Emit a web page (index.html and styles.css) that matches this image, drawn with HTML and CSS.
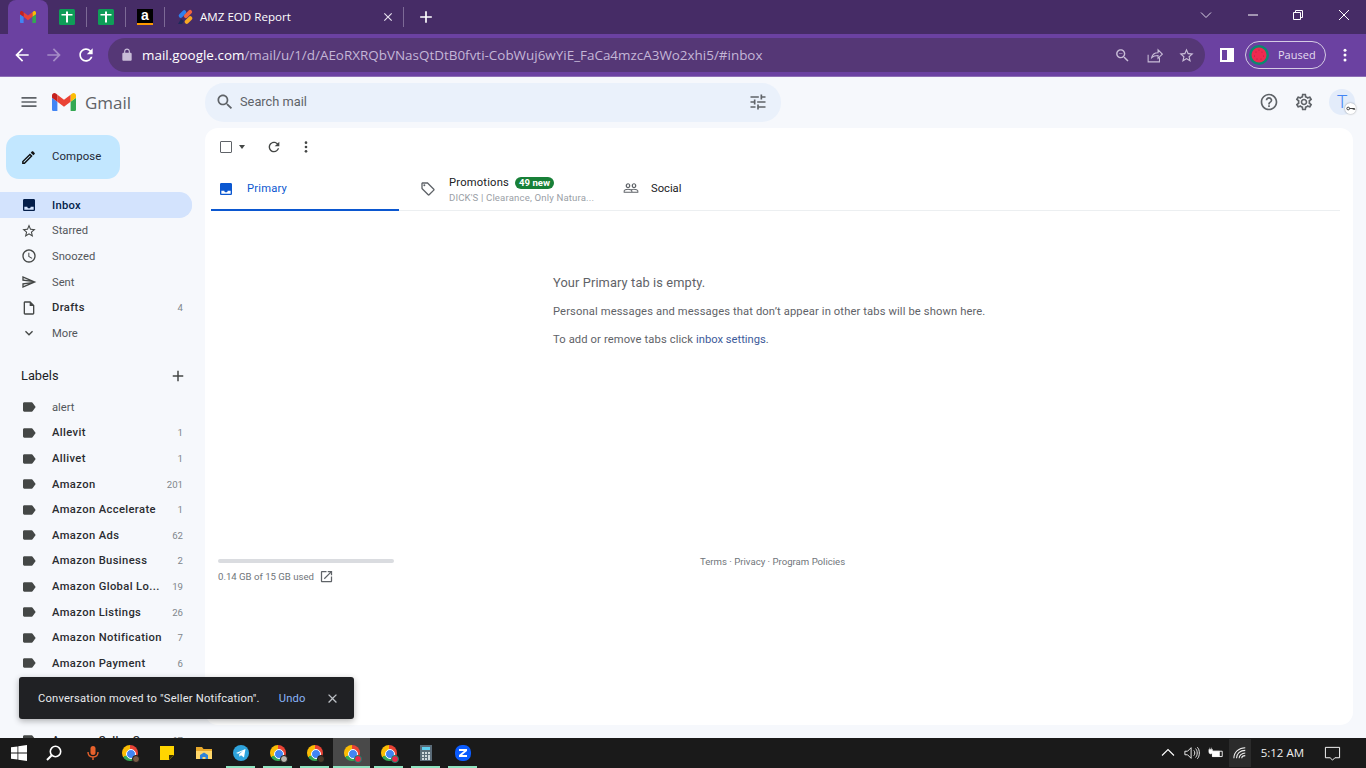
FILE: index.html
```html
<!DOCTYPE html>
<html lang="en">
<head>
    <meta charset="UTF-8">
    <meta name="viewport" content="width=device-width, initial-scale=1.0">
    <title>Inbox - Gmail</title>
    <link rel="stylesheet" href="styles.css">
</head>
<body>

<svg class="defs" width="0" height="0">
    <symbol id="i-menu" viewBox="0 0 24 24"><path d="M3 18h18v-2H3v2zm0-5h18v-2H3v2zm0-7v2h18V6H3z"/></symbol>
    <symbol id="i-search" viewBox="0 0 24 24"><path d="M15.5 14h-.79l-.28-.27C15.41 12.59 16 11.11 16 9.5 16 5.91 13.09 3 9.5 3S3 5.91 3 9.5 5.91 16 9.5 16c1.61 0 3.09-.59 4.23-1.57l.27.28v.79l5 4.99L20.49 19l-4.99-5zm-6 0C7.01 14 5 11.99 5 9.5S7.01 5 9.5 5 14 7.01 14 9.5 11.99 14 9.5 14z"/></symbol>
    <symbol id="i-tune" viewBox="0 0 24 24"><path d="M3 17v2h6v-2H3zM3 5v2h10V5H3zm10 16v-2h8v-2h-8v-2h-2v6h2zM7 9v2H3v2h4v2h2V9H7zm14 4v-2H11v2h10zm-6-4h2V7h4V5h-4V3h-2v6z"/></symbol>
    <symbol id="i-help" viewBox="0 0 24 24"><path d="M11 18h2v-2h-2v2zm1-16C6.48 2 2 6.48 2 12s4.48 10 10 10 10-4.48 10-10S17.52 2 12 2zm0 18c-4.41 0-8-3.59-8-8s3.59-8 8-8 8 3.59 8 8-3.59 8-8 8zm0-14c-2.21 0-4 1.79-4 4h2c0-1.1.9-2 2-2s2 .9 2 2c0 2-3 1.75-3 5h2c0-2.25 3-2.5 3-5 0-2.21-1.79-4-4-4z"/></symbol>
    <symbol id="i-gear" viewBox="0 0 24 24"><path d="M19.43 12.98c.04-.32.07-.64.07-.98 0-.34-.03-.66-.07-.98l2.11-1.65c.19-.15.24-.42.12-.64l-2-3.46c-.09-.16-.26-.25-.44-.25-.06 0-.12.01-.17.03l-2.49 1c-.52-.4-1.08-.73-1.69-.98l-.38-2.65C14.46 2.18 14.25 2 14 2h-4c-.25 0-.46.18-.49.42l-.38 2.65c-.61.25-1.17.59-1.69.98l-2.49-1c-.06-.02-.12-.03-.18-.03-.17 0-.34.09-.43.25l-2 3.46c-.13.22-.07.49.12.64l2.11 1.65c-.04.32-.07.65-.07.98 0 .33.03.66.07.98l-2.11 1.65c-.19.15-.24.42-.12.64l2 3.46c.09.16.26.25.44.25.06 0 .12-.01.17-.03l2.49-1c.52.4 1.08.73 1.69.98l.38 2.65c.03.24.24.42.49.42h4c.25 0 .46-.18.49-.42l.38-2.65c.61-.25 1.17-.59 1.69-.98l2.49 1c.06.02.12.03.18.03.17 0 .34-.09.43-.25l2-3.46c.12-.22.07-.49-.12-.64l-2.11-1.65zm-1.98-1.71c.04.31.05.52.05.73 0 .21-.02.43-.05.73l-.14 1.13.89.7 1.08.84-.7 1.21-1.27-.51-1.04-.42-.9.68c-.43.32-.84.56-1.25.73l-1.06.43-.16 1.13-.2 1.35h-1.4l-.19-1.35-.16-1.13-1.06-.43c-.43-.18-.83-.41-1.23-.71l-.91-.7-1.06.43-1.27.51-.7-1.21 1.08-.84.89-.7-.14-1.13c-.03-.31-.05-.54-.05-.74s.02-.43.05-.73l.14-1.13-.89-.7-1.08-.84.7-1.21 1.27.51 1.04.42.9-.68c.43-.32.84-.56 1.25-.73l1.06-.43.16-1.13.2-1.35h1.39l.19 1.35.16 1.13 1.06.43c.43.18.83.41 1.23.71l.91.7 1.06-.43 1.27-.51.7 1.21-1.07.85-.89.7.14 1.13zM12 8c-2.21 0-4 1.79-4 4s1.79 4 4 4 4-1.79 4-4-1.79-4-4-4zm0 6c-1.1 0-2-.9-2-2s.9-2 2-2 2 .9 2 2-.9 2-2 2z"/></symbol>
    <symbol id="i-inbox" viewBox="0 0 24 24"><path fill-rule="evenodd" d="M19 3H5c-1.1 0-2 .9-2 2v14c0 1.1.9 2 2 2h14c1.1 0 2-.9 2-2V5c0-1.1-.9-2-2-2zM5 14.5h4.5c0 1.4 1.1 2.5 2.5 2.5s2.5-1.1 2.5-2.5H19V19H5v-4.5z"/></symbol>
    <symbol id="i-star" viewBox="0 0 24 24"><path d="M22 9.24l-7.19-.62L12 2 9.19 8.63 2 9.24l5.46 4.73L5.82 21 12 17.27 18.18 21l-1.63-7.03L22 9.24zM12 15.4l-3.76 2.27 1-4.28-3.32-2.88 4.38-.38L12 6.1l1.71 4.04 4.38.38-3.32 2.88 1 4.28L12 15.4z"/></symbol>
    <symbol id="i-clock" viewBox="0 0 24 24"><path d="M11.99 2C6.47 2 2 6.48 2 12s4.47 10 9.99 10C17.52 22 22 17.52 22 12S17.52 2 11.99 2zM12 20c-4.42 0-8-3.58-8-8s3.58-8 8-8 8 3.58 8 8-3.58 8-8 8zm.5-13H11v6l5.25 3.15.75-1.23-4.5-2.67z"/></symbol>
    <symbol id="i-sent" viewBox="0 0 24 24"><path d="M4.01 6.03l7.51 3.22-7.52-1 .01-2.22m7.5 8.72L4 17.97v-2.22l7.51-1M2.01 3L2 10l15 2-15 2 .01 7L23 12 2.01 3z"/></symbol>
    <symbol id="i-draft" viewBox="0 0 24 24"><path d="M14 2H6c-1.1 0-2 .9-2 2v16c0 1.1.9 2 2 2h12c1.1 0 2-.9 2-2V8l-6-6zM6 20V4h7v5h5v11H6z"/></symbol>
    <symbol id="i-down" viewBox="0 0 24 24"><path d="M16.59 8.59L12 13.17 7.41 8.59 6 10l6 6 6-6z"/></symbol>
    <symbol id="i-label" viewBox="0 0 24 24"><path d="M17.63 5.84C17.27 5.33 16.67 5 16 5L5 5.01C3.9 5.01 3 5.9 3 7v10c0 1.1.9 1.99 2 1.99L16 19c.67 0 1.27-.33 1.63-.84L22 12l-4.37-6.16z"/></symbol>
    <symbol id="i-plus" viewBox="0 0 24 24"><path d="M19 13h-6v6h-2v-6H5v-2h6V5h2v6h6v2z"/></symbol>
    <symbol id="i-close" viewBox="0 0 24 24"><path d="M19 6.41L17.59 5 12 10.59 6.41 5 5 6.41 10.59 12 5 17.59 6.41 19 12 13.41 17.59 19 19 17.59 13.41 12z"/></symbol>
    <symbol id="i-more" viewBox="0 0 24 24"><circle cx="12" cy="5.5" r="2"/><circle cx="12" cy="12" r="2"/><circle cx="12" cy="18.5" r="2"/></symbol>
    <symbol id="i-sheet" viewBox="0 0 16 16"><rect width="16" height="16" rx="1.5" fill="#0f9d58"/><path fill="#fff" d="M7 2.5h2V5h4.5v1.5H9v7H7v-7H2.5V5H7z"/></symbol>
    <symbol id="i-gmail" viewBox="0 0 24 18">
        <path fill="#4285f4" d="M1.6 18h3.8V8.8L0 4.7v11.7C0 17.3.7 18 1.6 18z"/>
        <path fill="#34a853" d="M18.6 18h3.8c.9 0 1.6-.7 1.6-1.6V4.7l-5.4 4.1z"/>
        <path fill="#fbbc04" d="M18.6 1.7v7.1L24 4.7V2.5c0-2-2.3-3.2-3.9-1.9z"/>
        <path fill="#ea4335" d="M5.4 8.8V1.7L12 6.7l6.6-5v7.1L12 13.8z"/>
        <path fill="#c5221f" d="M0 2.5v2.2l5.4 4.1V1.7L3.9.6C2.3-.7 0 .5 0 2.5z"/>
    </symbol>
</svg>

<header class="browser">
    <div class="tabstrip">
        <div class="tab-pin active"><svg class="favicon"><use href="#i-gmail"/></svg></div>
        <div class="tab-pin"><svg class="favicon"><use href="#i-sheet"/></svg></div>
        <span class="tab-sep"></span>
        <div class="tab-pin"><svg class="favicon"><use href="#i-sheet"/></svg></div>
        <span class="tab-sep"></span>
        <div class="tab-pin"><span class="amazon-fav">a</span></div>
        <span class="tab-sep"></span>
        <div class="tab-full">
            <svg class="favicon" viewBox="0 0 16 16">
                <path fill="#1f2a5c" d="M1 15l3-5 3 2-2 3z"/>
                <rect x="1" y="3" width="9" height="4" rx="2" fill="#2f80ed" transform="rotate(-45 5.5 5)"/>
                <rect x="6" y="3" width="10" height="4" rx="2" fill="#f2643d" transform="rotate(-45 11 5)"/>
                <rect x="7" y="9" width="9" height="4" rx="2" fill="#f7a823" transform="rotate(-45 11.5 11)"/>
            </svg>
            <span class="tab-title">AMZ EOD Report</span>
            <svg class="tab-close"><use href="#i-close"/></svg>
        </div>
        <span class="tab-sep"></span>
        <svg class="new-tab"><use href="#i-plus"/></svg>
        <div class="window-btns">
            <svg class="win-chevron" viewBox="0 0 12 12"><path d="M1 3.5l5 5 5-5" fill="none" stroke="#d9d2e4" stroke-width="1"/></svg>
            <svg class="win-btn" viewBox="0 0 12 12"><path d="M1 6h10" stroke="#fff" stroke-width="1"/></svg>
            <svg class="win-btn" viewBox="0 0 12 12"><path d="M1.5 3.5h7v7h-7zM3.5 3.5v-2h7v7h-2" fill="none" stroke="#fff" stroke-width="1"/></svg>
            <svg class="win-btn" viewBox="0 0 12 12"><path d="M1 1l10 10M11 1L1 11" stroke="#fff" stroke-width="1"/></svg>
        </div>
    </div>
    <div class="toolbar">
        <svg class="nav-icon" viewBox="0 0 24 24"><path d="M20 11H7.83l5.59-5.59L12 4l-8 8 8 8 1.41-1.41L7.83 13H20v-2z"/></svg>
        <svg class="nav-icon dim" viewBox="0 0 24 24"><path d="M12 4l-1.41 1.41L16.17 11H4v2h12.17l-5.58 5.59L12 20l8-8z"/></svg>
        <svg class="nav-icon" viewBox="0 0 24 24"><path d="M17.65 6.35C16.2 4.9 14.21 4 12 4c-4.42 0-7.99 3.58-7.99 8s3.57 8 7.99 8c3.73 0 6.84-2.55 7.73-6h-2.08c-.82 2.33-3.04 4-5.65 4-3.31 0-6-2.69-6-6s2.69-6 6-6c1.66 0 3.14.69 4.22 1.78L13 11h7V4l-2.35 2.35z"/></svg>
        <div class="omnibox">
            <svg class="lock" viewBox="0 0 24 24"><path d="M18 8h-1V6c0-2.76-2.24-5-5-5S7 3.24 7 6v2H6c-1.1 0-2 .9-2 2v10c0 1.1.9 2 2 2h12c1.1 0 2-.9 2-2V10c0-1.1-.9-2-2-2zM9 6c0-1.66 1.34-3 3-3s3 1.34 3 3v2H9V6z"/></svg>
            <span class="url"><b>mail.google.com</b>/mail/u/1/d/AEoRXRQbVNasQtDtB0fvti-CobWuj6wYiE_FaCa4mzcA3Wo2xhi5/#inbox</span>
            <svg class="omni-icon" viewBox="0 0 24 24"><path d="M15.5 14h-.79l-.28-.27C15.41 12.59 16 11.11 16 9.5 16 5.91 13.09 3 9.5 3S3 5.91 3 9.5 5.91 16 9.5 16c1.61 0 3.09-.59 4.23-1.57l.27.28v.79l5 4.99L20.49 19l-4.99-5zm-6 0C7.01 14 5 11.99 5 9.5S7.01 5 9.5 5 14 7.01 14 9.5 11.99 14 9.5 14zM7 9h5v1H7z"/></svg>
            <svg class="omni-icon" viewBox="0 0 24 24"><path d="M3 11v10h16v-6M8 15c1-5 5-7 9-7V4l6 6-6 6v-4c-4 0-7 1-9 3z" fill="none" stroke="#c9bdd8" stroke-width="1.5"/></svg>
            <svg class="omni-icon" viewBox="0 0 24 24"><path d="M22 9.24l-7.19-.62L12 2 9.19 8.63 2 9.24l5.46 4.73L5.82 21 12 17.27 18.18 21l-1.63-7.03L22 9.24zM12 15.4l-3.76 2.27 1-4.28-3.32-2.88 4.38-.38L12 6.1l1.71 4.04 4.38.38-3.32 2.88 1 4.28L12 15.4z"/></svg>
        </div>
        <div class="side-panel-btn"><span></span></div>
        <div class="profile-chip">
            <svg class="melon" viewBox="0 0 20 20">
                <circle cx="10" cy="10" r="10" fill="#0b8a6f"/>
                <circle cx="10" cy="10" r="7.5" fill="#ee2a50"/>
                <circle cx="7" cy="7" r=".5" fill="#a81a3c"/>
                <circle cx="13" cy="7" r=".5" fill="#a81a3c"/>
                <circle cx="10" cy="5" r=".5" fill="#a81a3c"/>
                <circle cx="5.5" cy="11" r=".5" fill="#a81a3c"/>
                <circle cx="14.5" cy="11" r=".5" fill="#a81a3c"/>
                <circle cx="8" cy="14" r=".5" fill="#a81a3c"/>
                <circle cx="12" cy="14" r=".5" fill="#a81a3c"/>
            </svg>
            <span>Paused</span>
        </div>
        <svg class="nav-icon chrome-menu"><use href="#i-more"/></svg>
    </div>
</header>

<main class="gmail">
    <div class="topbar">
        <div class="brand">
            <svg class="icon-20"><use href="#i-menu"/></svg>
            <svg class="gmail-logo"><use href="#i-gmail"/></svg>
            <span class="gmail-word">Gmail</span>
        </div>
        <div class="searchbar">
            <svg class="icon-20"><use href="#i-search"/></svg>
            <span class="search-text">Search mail</span>
            <svg class="icon-20 tune"><use href="#i-tune"/></svg>
        </div>
        <div class="top-actions">
            <svg class="icon-20"><use href="#i-help"/></svg>
            <svg class="icon-20"><use href="#i-gear"/></svg>
            <div class="avatar">T<span class="key-badge">
                <svg viewBox="0 0 12 12"><circle cx="3.5" cy="6" r="1.5" fill="none" stroke="#333" stroke-width="1"/><path d="M5 6h5.5M9 6v1.5M10.5 6v1.5" stroke="#333" stroke-width="1" fill="none"/></svg>
            </span></div>
        </div>
    </div>

    <div class="columns">
        <aside class="sidebar">
            <button class="compose">
                <svg class="icon-18" viewBox="0 0 24 24"><path d="M14.06 9.02l.92.92L5.92 19H5v-.92l9.06-9.06M17.66 3c-.25 0-.51.1-.7.29l-1.83 1.83 3.75 3.75 1.83-1.83c.39-.39.39-1.02 0-1.41l-2.34-2.34c-.2-.2-.45-.29-.71-.29zm-3.6 3.19L3 17.25V21h3.75L17.81 9.94l-3.75-3.75z"/></svg>
                <span>Compose</span>
            </button>
            <ul class="nav-list">
                <li class="nav-row current"><svg><use href="#i-inbox"/></svg><span>Inbox</span></li>
                <li class="nav-row"><svg><use href="#i-star"/></svg><span>Starred</span></li>
                <li class="nav-row"><svg><use href="#i-clock"/></svg><span>Snoozed</span></li>
                <li class="nav-row"><svg><use href="#i-sent"/></svg><span>Sent</span></li>
                <li class="nav-row bold"><svg><use href="#i-draft"/></svg><span>Drafts</span><em>4</em></li>
                <li class="nav-row"><svg><use href="#i-down"/></svg><span>More</span></li>
            </ul>
            <div class="labels-head">
                <span>Labels</span>
                <svg class="icon-18"><use href="#i-plus"/></svg>
            </div>
            <ul class="nav-list">
                <li class="nav-row label"><svg><use href="#i-label"/></svg><span>alert</span></li>
                <li class="nav-row label bold"><svg><use href="#i-label"/></svg><span>Allevit</span><em>1</em></li>
                <li class="nav-row label bold"><svg><use href="#i-label"/></svg><span>Allivet</span><em>1</em></li>
                <li class="nav-row label bold"><svg><use href="#i-label"/></svg><span>Amazon</span><em>201</em></li>
                <li class="nav-row label bold"><svg><use href="#i-label"/></svg><span>Amazon Accelerate</span><em>1</em></li>
                <li class="nav-row label bold"><svg><use href="#i-label"/></svg><span>Amazon Ads</span><em>62</em></li>
                <li class="nav-row label bold"><svg><use href="#i-label"/></svg><span>Amazon Business</span><em>2</em></li>
                <li class="nav-row label bold"><svg><use href="#i-label"/></svg><span>Amazon Global Lo...</span><em>19</em></li>
                <li class="nav-row label bold"><svg><use href="#i-label"/></svg><span>Amazon Listings</span><em>26</em></li>
                <li class="nav-row label bold"><svg><use href="#i-label"/></svg><span>Amazon Notification</span><em>7</em></li>
                <li class="nav-row label bold"><svg><use href="#i-label"/></svg><span>Amazon Payment</span><em>6</em></li>
                <li class="nav-row label bold"></li>
                <li class="nav-row label bold"></li>
                <li class="nav-row label bold"><svg><use href="#i-label"/></svg><span>Amazon Seller C...</span><em>67</em></li>
            </ul>
        </aside>

        <section class="card">
            <div class="actions">
                <span class="checkbox"></span>
                <span class="caret"></span>
                <svg class="icon-16 refresh" viewBox="0 0 24 24"><path d="M17.65 6.35C16.2 4.9 14.21 4 12 4c-4.42 0-7.99 3.58-7.99 8s3.57 8 7.99 8c3.73 0 6.84-2.55 7.73-6h-2.08c-.82 2.33-3.04 4-5.65 4-3.31 0-6-2.69-6-6s2.69-6 6-6c1.66 0 3.14.69 4.22 1.78L13 11h7V4l-2.35 2.35z"/></svg>
                <svg class="icon-16 dots"><use href="#i-more"/></svg>
            </div>
            <div class="tabs">
                <div class="mail-tab primary">
                    <svg class="icon-16"><use href="#i-inbox"/></svg>
                    <span class="tab-name">Primary</span>
                </div>
                <div class="mail-tab promo">
                    <svg class="icon-16" viewBox="0 0 24 24"><path d="M21.41 11.58l-9-9C12.05 2.22 11.55 2 11 2H4c-1.1 0-2 .9-2 2v7c0 .55.22 1.05.59 1.42l9 9c.36.36.86.58 1.41.58.55 0 1.05-.22 1.41-.59l7-7c.37-.36.59-.86.59-1.41 0-.55-.23-1.06-.59-1.42zM13 20.01L4 11V4h7v-.01l9 9-7 7.02z"/><circle cx="6.5" cy="6.5" r="1.5"/></svg>
                    <div class="promo-text">
                        <div class="promo-line"><span class="tab-name">Promotions</span><span class="new-badge">49 new</span></div>
                        <div class="promo-sub">DICK'S | Clearance, Only Natura...</div>
                    </div>
                </div>
                <div class="mail-tab social">
                    <svg class="icon-16" viewBox="0 0 24 24"><path d="M16.5 13c-1.2 0-3.07.34-4.5 1-1.43-.67-3.3-1-4.5-1C5.33 13 1 14.08 1 16.25V19h22v-2.75c0-2.17-4.33-3.25-6.5-3.25zm-4 4.5h-10v-1.25c0-.54 2.56-1.75 5-1.75s5 1.21 5 1.75v1.25zm9 0H14v-1.25c0-.46-.2-.86-.52-1.22.88-.3 1.96-.53 3.02-.53 2.44 0 5 1.21 5 1.75v1.25zM7.5 12c1.93 0 3.5-1.57 3.5-3.5S9.43 5 7.5 5 4 6.57 4 8.5 5.57 12 7.5 12zm0-5.5c.83 0 1.5.67 1.5 2s-.67 2-1.5 2S6 9.33 6 8.5s.67-2 1.5-2zm9 5.5c1.93 0 3.5-1.57 3.5-3.5S18.43 5 16.5 5 13 6.57 13 8.5s1.57 3.5 3.5 3.5zm0-5.5c.83 0 1.5.67 1.5 2s-.67 2-1.5 2-1.5-.67-1.5-2 .67-2 1.5-2z"/></svg>
                    <span class="tab-name">Social</span>
                </div>
            </div>
            <div class="empty">
                <h2>Your Primary tab is empty.</h2>
                <p>Personal messages and messages that don’t appear in other tabs will be shown here.</p>
                <p>To add or remove tabs click <a>inbox settings</a>.</p>
            </div>
            <div class="card-foot">
                <div class="storage">
                    <div class="storage-bar"></div>
                    <div class="storage-text">0.14 GB of 15 GB used
                        <svg class="icon-14" viewBox="0 0 24 24"><path d="M19 19H5V5h7V3H5c-1.11 0-2 .9-2 2v14c0 1.1.89 2 2 2h14c1.1 0 2-.9 2-2v-7h-2v7zM14 3v2h3.59l-9.83 9.83 1.41 1.41L19 6.41V10h2V3h-7z"/></svg>
                    </div>
                </div>
                <div class="foot-links">Terms · Privacy · Program Policies</div>
            </div>
        </section>
    </div>

    <div class="toast">
        <span>Conversation moved to "Seller Notifcation".</span>
        <a>Undo</a>
        <svg><use href="#i-close"/></svg>
    </div>
</main>

<footer class="taskbar">
    <div class="task-item">
        <svg class="task-icon" viewBox="0 0 16 16"><path fill="#fff" d="M0 2.3l6.5-.9v6.2H0zM7.3 1.3L16 0v7.6H7.3zM0 8.4h6.5v6.2L0 13.7zM7.3 8.4H16V16l-8.7-1.2z"/></svg>
    </div>
    <div class="task-item search-item">
        <svg class="task-icon" viewBox="0 0 16 16"><circle cx="9.5" cy="6.5" r="5.2" fill="none" stroke="#fff" stroke-width="1.6"/><path d="M5.8 10.2L1 15" stroke="#fff" stroke-width="2"/></svg>
    </div>
    <div class="task-item">
        <svg class="task-icon" viewBox="0 0 16 16"><rect x="5.5" y="1" width="5" height="9" rx="2.5" fill="#e8622c"/><path d="M3 7c0 3 2 5 5 5s5-2 5-5M8 12v3" fill="none" stroke="#e8622c" stroke-width="1.4"/></svg>
    </div>
    <div class="task-item"><span class="chrome"><span class="chrome-dot brown"></span></span></div>
    <div class="task-item">
        <svg class="task-icon" viewBox="0 0 16 16"><path fill="#ffd500" d="M1 1h14v9l-5 5H1z"/><path fill="#3a3000" d="M15 10h-5v5z"/></svg>
    </div>
    <div class="task-item">
        <svg class="task-icon" viewBox="0 0 16 16"><path fill="#e8a92c" d="M0 2h6l1.5 2H16v10H0z"/><path fill="#ffd76a" d="M0 6h16v8H0z"/><path fill="#2f83d8" d="M4 10l4-2.5 4 2.5v4H9.5v-2h-3v2H4z"/></svg>
    </div>
    <div class="task-item on">
        <svg class="task-icon" viewBox="0 0 16 16"><circle cx="8" cy="8" r="8" fill="#2ea3dc"/><path fill="#fff" d="M3 8l9.5-4-1.5 8.5-3-2.2-1.5 1.5-.4-2.5 4-3.5-5 3z"/></svg>
    </div>
    <div class="task-item on"><span class="chrome"><span class="chrome-dot grey"></span></span></div>
    <div class="task-item on"><span class="chrome"><span class="chrome-dot dark"></span></span></div>
    <div class="task-item on focused"><span class="chrome"><span class="chrome-dot pink"></span></span></div>
    <div class="task-item on"><span class="chrome"><span class="chrome-dot pink"></span></span></div>
    <div class="task-item on">
        <svg class="task-icon" viewBox="0 0 16 16"><rect x="2" width="12" height="16" fill="#5a6b78"/><rect x="4" y="2" width="8" height="3" fill="#5fd0f0"/><path fill="#cfd8de" d="M4 7h2v2H4zM7 7h2v2H7zM10 7h2v2h-2zM4 10h2v2H4zM7 10h2v2H7zM10 10h2v5h-2zM4 13h2v2H4zM7 13h2v2H7z"/></svg>
    </div>
    <div class="task-item on">
        <svg class="task-icon" viewBox="0 0 16 16"><rect width="16" height="16" rx="7" fill="#0b5cff"/><path fill="#fff" d="M4 4h8v2L7 10h5v2H4v-2l5-4H4z"/></svg>
    </div>
    <div class="tray">
        <svg viewBox="0 0 14 14" class="tray-chevron"><path d="M1 9.5l6-6 6 6" fill="none" stroke="#fff" stroke-width="1.1"/></svg>
        <svg viewBox="0 0 18 16" class="tray-icon volume"><path d="M1 6h3l4-4v12l-4-4H1zM11 5c1.5 1.5 1.5 4.5 0 6M13 3c2.5 2.5 2.5 7.5 0 10M15 1.5c3 3 3 10 0 13" fill="none" stroke="#fff" stroke-width="1"/></svg>
        <svg viewBox="0 0 18 16" class="tray-icon"><path d="M5 6h11v6H5z" fill="none" stroke="#fff" stroke-width="1"/><path d="M5 6h8v6H5zM1 4h4v3a2 2 0 0 1-4 0zM2 2v2M4 2v2" fill="#fff" stroke="#fff" stroke-width=".6"/></svg>
        <div class="wifi-box">
            <svg viewBox="0 0 16 16" class="tray-icon"><path d="M1 14C1 7 7 2 14 2M4 14c0-5 4-9 10-9M7 14c0-3 3-6 7-6M10 14c0-1.5 1.5-3 4-3" fill="none" stroke="#f0f0f0" stroke-width="1.2"/></svg>
        </div>
        <span class="clock">5:12 AM</span>
        <svg viewBox="0 0 18 18" class="notif"><path d="M1.5 2.5h15v11h-5L9 16l-2.5-2.500h-5z" fill="none" stroke="#fff" stroke-width="1"/></svg>
    </div>
</footer>

</body>
</html>
```

FILE: styles.css
```css
* {
    box-sizing: border-box;
}
html, body {
    margin: 0;
    height: 768px;
    overflow: hidden;
}
body {
    font-family: Roboto, 'Liberation Sans', sans-serif;
    display: flex;
    flex-direction: column;
    width: 1366px;
    background-color: #f6f8fc;
}
.defs {
    position: absolute;
}
ul {
    list-style: none;
    margin: 0;
    padding: 0;
}

/* browser frame */
.browser {
    height: 77px;
    flex-shrink: 0;
}
.tabstrip {
    height: 34px;
    background-color: #462c66;
    display: flex;
    align-items: center;
    padding-left: 8px;
}
.tab-pin {
    width: 38px;
    height: 34px;
    display: flex;
    align-items: center;
    justify-content: center;
    flex-shrink: 0;
}
.tab-pin.active {
    width: 40px;
    background-color: #6b41a1;
    border-radius: 8px 8px 0 0;
}
.favicon {
    width: 16px;
    height: 16px;
}
.tab-sep {
    width: 1px;
    height: 20px;
    background-color: #7d6a96;
    flex-shrink: 0;
}
.amazon-fav {
    width: 16px;
    height: 16px;
    background-color: #000;
    color: #fff;
    font: bold 14px/13px 'Liberation Sans', sans-serif;
    text-align: center;
    border-bottom: 2px solid #f90;
}
.tab-full {
    width: 238px;
    display: flex;
    align-items: center;
    padding-left: 12px;
    flex-shrink: 0;
}
.tab-title {
    font: 11.6px 'Open Sans', sans-serif;
    color: #fff;
    margin: 0 0 1px 7px;
    flex: 1;
}
.tab-close {
    width: 14px;
    height: 14px;
    fill: #e6e0ee;
    margin-right: 8px;
}
.new-tab {
    width: 20px;
    height: 20px;
    fill: #fff;
    margin-left: 12px;
}
.window-btns {
    margin-left: auto;
    display: flex;
    align-items: center;
}
.win-chevron {
    width: 12px;
    height: 12px;
    margin-right: 35px;
    margin-top: -5px;
}
.win-btn {
    width: 12px;
    height: 12px;
    margin-right: 34px;
    margin-top: -5px;
}
.win-btn:nth-child(2) {
    margin-right: 33px;
}
.win-btn:last-child {
    margin-right: 16px;
}
.toolbar {
    height: 43px;
    background-color: #6b41a1;
    border-bottom: 1px solid #8d6fb5;
    display: flex;
    align-items: center;
    padding-left: 12px;
}
.nav-icon {
    width: 20px;
    height: 20px;
    fill: #fff;
    margin-right: 12px;
    flex-shrink: 0;
}
.nav-icon.dim {
    fill: #a58cc6;
}
.omnibox {
    height: 34px;
    width: 1097px;
    border-radius: 17px;
    background-color: #553776;
    display: flex;
    align-items: center;
    padding: 0 10px 0 12px;
}
.lock {
    width: 14px;
    height: 14px;
    fill: #c9bdd8;
    flex-shrink: 0;
}
.url {
    font: 13.45px 'Open Sans', sans-serif;
    color: #c4b6d6;
    margin-left: 8px;
    flex: 1;
    white-space: nowrap;
}
.url b {
    color: #fff;
    font-weight: 400;
}
.omni-icon {
    width: 17px;
    height: 17px;
    fill: #c9bdd8;
    margin-left: 15px;
}
.side-panel-btn {
    width: 14px;
    height: 14px;
    background-color: #fff;
    margin-left: 15px;
    padding: 2px 7px 2px 2px;
    flex-shrink: 0;
}
.side-panel-btn span {
    display: block;
    height: 100%;
    background-color: #6b41a1;
}
.profile-chip {
    width: 81px;
    height: 28px;
    margin-left: 11px;
    border: 1px solid #d5cce4;
    border-radius: 14px;
    display: flex;
    align-items: center;
    gap: 9px;
    padding-left: 3px;
    font: 11px 'Open Sans', sans-serif;
    color: #e4dcf0;
    flex-shrink: 0;
}
.profile-chip span {
    margin-bottom: 1px;
}
.melon {
    width: 20px;
    height: 20px;
    flex-shrink: 0;
}
.chrome-menu {
    margin: 0 0 0 10px;
    width: 18px;
    height: 18px;
}

/* gmail */
.gmail {
    position: relative;
    flex: 1;
    min-height: 0;
    display: flex;
    flex-direction: column;
    overflow: hidden;
}
.icon-20 {
    width: 20px;
    height: 20px;
    fill: #5f6368;
    flex-shrink: 0;
}
.icon-18 {
    width: 18px;
    height: 18px;
    fill: #444746;
    flex-shrink: 0;
}
.icon-16 {
    width: 16px;
    height: 16px;
    fill: #5f6368;
    flex-shrink: 0;
}
.icon-14 {
    width: 15px;
    height: 15px;
    fill: #5f6368;
    margin-left: 4px;
}
.topbar {
    height: 51px;
    flex-shrink: 0;
    display: flex;
    align-items: center;
    padding-bottom: 1px;
}
.brand {
    width: 205px;
    display: flex;
    align-items: center;
    padding-left: 19px;
}
.gmail-logo {
    width: 24px;
    height: 18px;
    margin-left: 13px;
}
.gmail-word {
    font: 17px 'Open Sans', sans-serif;
    color: #5f6368;
    margin-left: 9px;
}
.searchbar {
    width: 576px;
    height: 39px;
    border-radius: 19px;
    background-color: #eaf1fb;
    display: flex;
    align-items: center;
    padding: 0 13px 0 10px;
}
.search-text {
    font-size: 12.8px;
    color: #5f6368;
    margin: 0 0 2px 5px;
    flex: 1;
}
.top-actions {
    margin-left: auto;
    display: flex;
    align-items: center;
    gap: 15px;
    padding-right: 11px;
}
.avatar {
    position: relative;
    width: 26px;
    height: 26px;
    border-radius: 50%;
    background-color: #e3ecfa;
    color: #4285f4;
    font-size: 18px;
    font-weight: 300;
    line-height: 26px;
    text-align: center;
}
.key-badge {
    position: absolute;
    right: -1px;
    bottom: 1px;
    width: 11px;
    height: 11px;
    border-radius: 50%;
    background-color: #fff;
    box-shadow: 0 0 2px rgba(0, 0, 0, 0.4);
    display: flex;
}
.key-badge svg {
    width: 11px;
    height: 11px;
}
.columns {
    flex: 1;
    min-height: 0;
    display: flex;
}
.sidebar {
    width: 205px;
    flex-shrink: 0;
    overflow: hidden;
    height: 661px;
    padding-top: 7px;
}
.compose {
    width: 114px;
    height: 44px;
    margin-left: 6px;
    border: none;
    border-radius: 13px;
    background-color: #c2e7ff;
    display: flex;
    align-items: center;
    gap: 15px;
    padding-left: 14px;
    font: 400 11.4px Roboto, sans-serif;
    letter-spacing: 0.1px;
    color: #1f2937;
}
.compose span {
    margin-bottom: 2px;
}
.compose .icon-18 {
    fill: #111;
    width: 17px;
    height: 17px;
}
.compose + .nav-list {
    margin-top: 13.5px;
}
.nav-row {
    height: 25.6px;
    width: 192px;
    display: flex;
    align-items: center;
    padding: 0 9px 0 21px;
    border-radius: 0 13px 13px 0;
    font-size: 11.2px;
    color: #53575b;
}
.nav-row svg {
    width: 16px;
    height: 16px;
    fill: #444746;
    flex-shrink: 0;
}
.nav-row span {
    margin-left: 15px;
    flex: 1;
    white-space: nowrap;
}
.nav-row em {
    font-style: normal;
    font-weight: 400;
    font-size: 9.6px;
    letter-spacing: 0;
    color: #80868b;
}
.nav-row.bold {
    font-weight: 500;
    letter-spacing: 0.38px;
    color: #2a2c30;
}
.nav-row.current {
    background-color: #d3e3fd;
    box-shadow: 0 -1px 0 #d3e3fd;
    font-weight: 500;
    letter-spacing: 0.3px;
    color: #041e49;
}
.nav-row.current svg {
    fill: #041e49;
}
.labels-head {
    height: 26px;
    margin-top: 16.5px;
    display: flex;
    align-items: center;
    justify-content: space-between;
    padding: 0 18px 0 21px;
    font-size: 12.8px;
    color: #202124;
}
.labels-head + .nav-list {
    margin-top: 6px;
}

/* card */
.card {
    width: 1148px;
    height: 597px;
    background-color: #fff;
    border-radius: 13px;
    display: flex;
    flex-direction: column;
}
.actions {
    height: 38px;
    display: flex;
    align-items: center;
    padding-left: 13px;
    flex-shrink: 0;
}
.checkbox {
    width: 12px;
    height: 12px;
    border: 1.5px solid #5f6368;
    border-radius: 1px;
    margin-left: 2px;
}
.caret {
    border: 3.5px solid transparent;
    border-top: 4px solid #444746;
    border-bottom: 0;
    margin-left: 7px;
}
.refresh {
    margin-left: 21px;
    fill: #444746;
}
.dots {
    margin-left: 16px;
    fill: #444746;
}
.tabs {
    height: 45px;
    display: flex;
    margin: 0 13px 0 6px;
    border-bottom: 1px solid #eceff1;
    flex-shrink: 0;
}
.mail-tab {
    display: flex;
    align-items: center;
    position: relative;
    font-size: 11.2px;
    color: #202124;
}
.mail-tab.primary {
    width: 188px;
    padding: 2px 0 0 7px;
    color: #0b57d0;
    letter-spacing: 0.2px;
    border-bottom: 2px solid #0b57d0;
    height: 45px;
}
.mail-tab.primary .icon-16 {
    fill: #0b57d0;
}
.mail-tab.primary .tab-name {
    margin-left: 13px;
}
.mail-tab.promo {
    width: 203px;
    padding: 1px 0 0 21px;
}
.promo-line .tab-name {
    letter-spacing: 0.2px;
}
.promo-text {
    margin: 2px 0 0 13px;
}
.promo-line {
    display: flex;
    align-items: center;
    gap: 6px;
}
.new-badge {
    background-color: #188038;
    color: #fff;
    font-size: 9.6px;
    font-weight: 700;
    line-height: 12px;
    padding: 0 4px;
    border-radius: 6px;
}
.promo-sub {
    font-size: 9.6px;
    letter-spacing: 0.15px;
    color: #9aa0a6;
    margin-top: 3px;
    white-space: nowrap;
}
.mail-tab.social {
    padding-left: 21px;
}
.mail-tab.social .tab-name {
    margin-left: 12px;
}
.empty {
    margin: 64px 0 0 348px;
    color: #5f6368;
    font-size: 11.2px;
    letter-spacing: 0.12px;
}
.empty h2 {
    margin: 0 0 14px;
    font-size: 12.8px;
    font-weight: 400;
    line-height: 16px;
}
.empty p {
    margin: 0 0 15px;
    line-height: 13px;
}
.empty a {
    color: #3c5a9a;
    letter-spacing: 0;
}
.card-foot {
    margin-top: 198px;
    display: flex;
    padding-left: 13px;
    font-size: 9.6px;
    color: #70757a;
}
.storage {
    width: 176px;
}
.storage-bar {
    height: 4px;
    background-color: #dadce0;
    border-radius: 2px;
}
.storage-text {
    display: flex;
    align-items: center;
    margin-top: 6px;
    white-space: nowrap;
}
.storage-text .icon-14 {
    margin-left: 5px;
}
.foot-links {
    margin: -3px 0 0 306px;
}

/* toast */
.toast {
    position: absolute;
    left: 19px;
    bottom: 19px;
    width: 335px;
    height: 42px;
    border-radius: 3px;
    background-color: #202124;
    box-shadow: 0 2px 6px rgba(0, 0, 0, 0.3);
    display: flex;
    align-items: center;
    padding-left: 19px;
    font-size: 11.2px;
    letter-spacing: 0.2px;
    color: #e8eaed;
}
.toast a {
    color: #8ab4f8;
    margin-left: 19px;
}
.toast svg {
    width: 15px;
    height: 15px;
    fill: #bdc1c6;
    margin-left: 19px;
}

/* taskbar */
.taskbar {
    height: 30px;
    flex-shrink: 0;
    background-color: #1a1a1a;
    display: flex;
    align-items: center;
}
.task-item {
    width: 37px;
    height: 30px;
    display: flex;
    align-items: center;
    justify-content: center;
    position: relative;
    flex-shrink: 0;
}
.search-item .task-icon {
    margin-right: 3px;
}
.task-item.on::after {
    content: '';
    position: absolute;
    left: 4px;
    right: 4px;
    bottom: 0;
    height: 2px;
    background-color: #8fe3c0;
}
.task-item.focused {
    background-color: #494949;
}
.task-item.focused::after {
    left: 0;
    right: 0;
}
.task-icon {
    width: 16px;
    height: 16px;
}
.chrome {
    position: relative;
    width: 16px;
    height: 16px;
    border-radius: 50%;
    background: conic-gradient(#ea4335 0 120deg, #34a853 120deg 240deg, #fbbc04 240deg 360deg);
    display: block;
}
.chrome::before {
    content: '';
    position: absolute;
    left: 4px;
    top: 4px;
    width: 8px;
    height: 8px;
    border-radius: 50%;
    background-color: #4285f4;
    border: 1px solid #fff;
}
.chrome-dot {
    position: absolute;
    right: -2px;
    bottom: -2px;
    width: 8px;
    height: 8px;
    border-radius: 50%;
    border: 1px solid #1a1a1a;
}
.chrome-dot.brown {
    background-color: #7b5a44;
}
.chrome-dot.grey {
    background-color: #b9b4ae;
}
.chrome-dot.dark {
    background-color: #4a3a2a;
}
.chrome-dot.pink {
    background-color: #e8274b;
    border-color: #0b8a6f;
}
.tray {
    margin-left: auto;
    display: flex;
    align-items: center;
    height: 30px;
    color: #fff;
}
.tray-chevron {
    width: 14px;
    height: 14px;
    margin-right: 9px;
}
.tray-icon {
    width: 16px;
    height: 16px;
    margin-right: 7px;
    display: block;
}
.tray-icon.volume {
    margin-right: 8px;
}
.wifi-box {
    width: 22px;
    height: 28px;
    display: flex;
    align-items: center;
    justify-content: center;
    background-color: #2b2b2b;
    margin-left: -2px;
}
.wifi-box .tray-icon {
    margin: 0;
    width: 14px;
    height: 14px;
}
.clock {
    font: 11.5px 'Open Sans', sans-serif;
    margin: 0 0 1px 10px;
    color: #f0f0f0;
}
.notif {
    width: 17px;
    height: 17px;
    margin: 0 25px 0 20px;
}
```
